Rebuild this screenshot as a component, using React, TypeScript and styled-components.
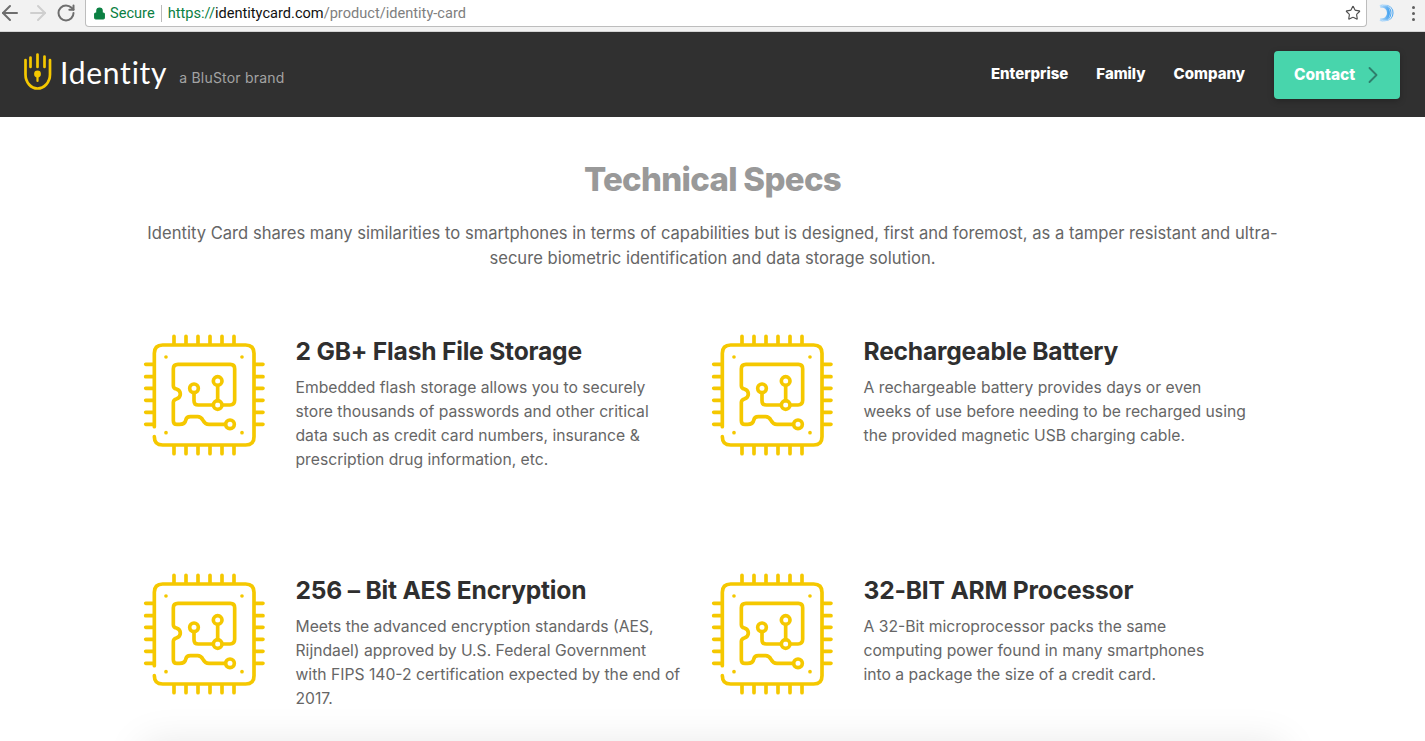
import React from "react";
import styled, { createGlobalStyle } from "styled-components";
import { ArrowLeft, ArrowRight, RotateCw, Lock, Star, ChevronRight } from "lucide-react";

const Global = createGlobalStyle`
  html, body { margin: 0; padding: 0; background: #fff; height: 741px; overflow: hidden; }
  * { box-sizing: border-box; }
`;
const Page = styled.div`
  width: 1425px; height: 741px; overflow: hidden;
  font-family: Inter, "Noto Sans", sans-serif; color: #666;
`;
const Chrome = styled.div`
  height: 32px; background: #f2f2f2; border-bottom: 1px solid #d4d4d4;
  display: flex; align-items: flex-start;
`;
const NavIcons = styled.div`
  width: 85px; height: 26px; display: flex; align-items: center; flex: none;
`;
const NavSlot = styled.span`
  width: 28px; height: 26px; display: flex; align-items: center; justify-content: center; flex: none;
  &:first-child { margin-left: -4px; }
`;
const AddressBar = styled.div`
  width: 1282px; height: 27px; background: #fff; border: 1px solid #bdbdbd; border-top: none;
  border-radius: 0 0 4px 4px; display: flex; align-items: center; padding: 0 5px 0 7px;
  font: 14.6px "Roboto", sans-serif; flex: none;
`;
const Secure = styled.span`
  color: #0b8043; display: flex; align-items: center; gap: 4px; padding-right: 6px; margin-right: 6px;
  border-right: 1px solid #bbb; line-height: 17px;
`;
const Https = styled.span` color: #0b8043; `;
const Host = styled.span` color: #111; `;
const UrlPath = styled.span` color: #808080; `;
const BarSpacer = styled.div` flex: 1; `;
const Extensions = styled.div`
  flex: 1; height: 26px; display: flex; align-items: center; justify-content: space-between; padding: 0 10px 0 12px;
`;
const Dots = styled.div`
  display: flex; flex-direction: column; gap: 3px;
  span { width: 3px; height: 3px; border-radius: 50%; background: #5f5f5f; display: block; }
`;
const Header = styled.header`
  height: 85px; background: #303030; display: flex; align-items: center; justify-content: space-between;
  padding: 0 25px 0 23px;
`;
const Brand = styled.div` display: flex; align-items: center; margin-top: -6px; `;
const Wordmark = styled.span`
  font: 400 30px/1 Lato, sans-serif; color: #fff; margin-left: 7px; letter-spacing: 0.75px; position: relative; top: 0;
`;
const Tagline = styled.span`
  font: 400 14px/1 Inter, sans-serif; color: #a3a3a3; margin-left: 12px; position: relative; top: 6px; letter-spacing: 0.2px;
`;
const Nav = styled.nav` display: flex; align-items: center; `;
const NavLink = styled.a`
  font: 800 15px/1 Inter, sans-serif; color: #fff; margin-right: 28px; position: relative; top: -1px;
`;
const ContactButton = styled.a`
  width: 126px; height: 48px; background: #48d5ac; border-radius: 4px; display: flex; align-items: center;
  padding-left: 20px; gap: 4px; color: #fff; font: 800 15.5px/1 Inter, sans-serif;
  box-shadow: 0 2px 6px rgba(0,0,0,.25); margin-left: 1px;
`;
const Main = styled.main` width: 1140px; margin: 0 auto; padding-top: 43px; `;
const Title = styled.h1`
  margin: 0; text-align: center; font: 800 33px/39px Inter, sans-serif; color: #999; letter-spacing: -0.7px;
`;
const Intro = styled.p`
  margin: 22px 0 0; text-align: center; font: 400 16.6px/25px Inter, sans-serif; color: #666; white-space: nowrap;
`;
const Grid = styled.div`
  display: grid; grid-template-columns: 568px 568px; grid-auto-rows: 137px; row-gap: 102px; margin: 64px 0 0 1px;
`;
const Feature = styled.div` display: flex; align-items: flex-start; `;
const FeatureBody = styled.div` margin-left: 32px; `;
const FeatureTitle = styled.h3`
  margin: 0 0 9px; font: 700 24.6px/32px Inter, sans-serif; color: #2f2f2f; letter-spacing: -0.2px; white-space: nowrap;
`;
const FeatureText = styled.p`
  margin: 0; font: 400 15.7px/24px Inter, sans-serif; color: #666; white-space: nowrap;
`;
const NextCard = styled.div`
  width: 1140px; height: 60px; margin-top: 33px; background: #fff; box-shadow: 0 0 40px rgba(0,0,0,.1);
`;

const ChipSvg = styled.svg` display: block; flex: none; margin-top: -10px; margin-left: -9px; margin-right: -11px; `;

const Chip = () => {
  const xs = [117, 153, 189, 225, 261, 297];
  const ys = [118, 155, 190, 226, 262, 298];
  return (
    <ChipSvg width="140" height="140" viewBox="0 0 420 420" fill="none" stroke="#f5c800" strokeWidth="11" strokeLinecap="round" strokeLinejoin="round">
      {xs.map((x) => <path key={x} d={`M${x} 34V56M${x} 364V386`} />)}
      {ys.map((y) => <path key={y} d={`M32 ${y}H54M362 ${y}H384`} />)}
      <path d="M58 305V85Q58 60 83 60H332Q357 60 357 85V335Q357 360 332 360H83Q58 360 58 335" />
      <g fill="#f5c800" stroke="none">
        <circle cx="93" cy="96" r="5.5" /><circle cx="321" cy="96" r="5.5" />
        <circle cx="93" cy="323" r="5.5" /><circle cx="321" cy="323" r="5.5" />
      </g>
      <path d="M235 240H190Q177 240 177 227V204" />
      <path d="M262 240H285Q299 240 299 226V131Q299 118 286 118H129Q115 118 115 131V182Q115 190 124 192Q136 196 136 207Q136 218 124 222Q115 225 115 232V287Q115 298 126 298H133Q150 298 152 286Q154 275 166 275H188Q198 275 204 286Q210 298 222 298H271" />
      <path d="M248 182V227" />
      <circle cx="177" cy="190" r="13" /><circle cx="248" cy="168" r="13" />
      <circle cx="248" cy="240" r="13" /><circle cx="285" cy="298" r="13" />
    </ChipSvg>
  );
};

const HandLogo = () => (
  <svg width="30" height="38" viewBox="0 0 30 38" fill="none" stroke="#f5c800" strokeWidth="2.7" strokeLinecap="round">
    <path d="M2.5 7V21.5C2.5 29.5 8 35.5 14.5 35.5S27 29.5 27 21.5V7" />
    <path d="M7.5 4.5V14M14.5 1.5V14M21.5 3.5V14" />
    <circle cx="14.5" cy="21" r="3.4" fill="#f5c800" stroke="none" />
    <path d="M14.5 22V28" strokeWidth="2.2" />
  </svg>
);

const DuoMark = () => (
  <svg width="16" height="18" viewBox="0 0 16 18" fill="none" strokeWidth="1.1">
    <defs>
      <linearGradient id="duoFade" x1="0" x2="1" y1="0" y2="0">
        <stop offset="0" stopColor="#bfe0fb" />
        <stop offset="1" stopColor="#4da6f0" />
      </linearGradient>
    </defs>
    <path d="M1 2.5C6 1 9.5 4.5 9.5 9S6 17 1 15.5" stroke="url(#duoFade)" strokeWidth="3" />
    <path d="M3 1.5C9 1 12 4.5 12 9S9 17 3 16.5" stroke="url(#duoFade)" />
    <path d="M5 1C11 1 14 4.5 14 9S11 17 5 17" stroke="url(#duoFade)" />
  </svg>
);

type FeatureData = { title: string; lines: string[] };
const features: FeatureData[] = [
  { title: "2 GB+ Flash File Storage", lines: ["Embedded flash storage allows you to securely", "store thousands of passwords and other critical", "data such as credit card numbers, insurance &", "prescription drug information, etc."] },
  { title: "Rechargeable Battery", lines: ["A rechargeable battery provides days or even", "weeks of use before needing to be recharged using", "the provided magnetic USB charging cable."] },
  { title: "256 – Bit AES Encryption", lines: ["Meets the advanced encryption standards (AES,", "Rijndael) approved by U.S. Federal Government", "with FIPS 140-2 certification expected by the end of", "2017."] },
  { title: "32-BIT ARM Processor", lines: ["A 32-Bit microprocessor packs the same", "computing power found in many smartphones", "into a package the size of a credit card."] },
];

export default function App() {
  return (
    <Page>
      <Global />
      <Chrome>
        <NavIcons>
          <NavSlot><ArrowLeft size={24} color="#6e6e6e" strokeWidth={2} /></NavSlot>
          <NavSlot><ArrowRight size={24} color="#cfcfcf" strokeWidth={2} /></NavSlot>
          <NavSlot><RotateCw size={20} color="#6e6e6e" strokeWidth={2.4} /></NavSlot>
        </NavIcons>
        <AddressBar>
          <Secure><Lock size={13} color="#0b8043" fill="#0b8043" />Secure</Secure>
          <span><Https>https://</Https><Host>identitycard.com</Host><UrlPath>/product/identity-card</UrlPath></span>
          <BarSpacer />
          <Star size={16} color="#4f4f4f" strokeWidth={1.7} />
        </AddressBar>
        <Extensions>
          <DuoMark />
          <Dots><span /><span /><span /></Dots>
        </Extensions>
      </Chrome>
      <Header>
        <Brand>
          <HandLogo />
          <Wordmark>Identity</Wordmark>
          <Tagline>a BluStor brand</Tagline>
        </Brand>
        <Nav>
          <NavLink>Enterprise</NavLink>
          <NavLink>Family</NavLink>
          <NavLink>Company</NavLink>
          <ContactButton>Contact<ChevronRight size={28} color="#2f7f6c" strokeWidth={1.6} /></ContactButton>
        </Nav>
      </Header>
      <Main>
        <Title>Technical Specs</Title>
        <Intro>
          Identity Card shares many similarities to smartphones in terms of capabilities but is designed, first and foremost, as a tamper resistant and ultra-<br />
          secure biometric identification and data storage solution.
        </Intro>
        <Grid>
          {features.map((f) => (
            <Feature key={f.title}>
              <Chip />
              <FeatureBody>
                <FeatureTitle>{f.title}</FeatureTitle>
                <FeatureText>
                  {f.lines.map((l) => <React.Fragment key={l}>{l}<br /></React.Fragment>)}
                </FeatureText>
              </FeatureBody>
            </Feature>
          ))}
        </Grid>
        <NextCard />
      </Main>
    </Page>
  );
}
